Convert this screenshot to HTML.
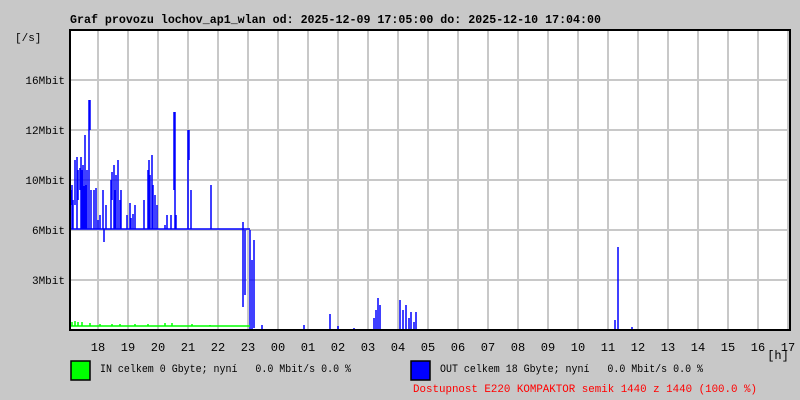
<!DOCTYPE html>
<html><head><style>
html,body{margin:0;padding:0;background:#c8c8c8;width:800px;height:400px;overflow:hidden}
svg{display:block}
text{font-family:"Liberation Mono",monospace;white-space:pre}
</style></head><body>
<svg width="800" height="400" xmlns="http://www.w3.org/2000/svg" xml:space="preserve">
<rect width="800" height="400" fill="#c8c8c8"/>
<text x="70" y="23" font-size="12" font-weight="bold" textLength="531" lengthAdjust="spacingAndGlyphs">Graf provozu lochov_ap1_wlan od: 2025-12-09 17:05:00 do: 2025-12-10 17:04:00</text>
<text x="15" y="41" font-size="11">[/s]</text>
<rect x="70" y="30" width="720" height="300" fill="#fff"/>
<g stroke="#c8c8c8" stroke-width="2">
<path d="M98 30V330M128 30V330M158 30V330M188 30V330M218 30V330M248 30V330M278 30V330M308 30V330M338 30V330M368 30V330M398 30V330M428 30V330M458 30V330M488 30V330M518 30V330M548 30V330M578 30V330M608 30V330M638 30V330M668 30V330M698 30V330M728 30V330M758 30V330M788 30V330"/>
<path d="M70 80H800M70 130H800M70 180H800M70 230H800M70 280H800"/>
</g>
<g font-size="11" text-anchor="end">
<text x="65" y="84">16Mbit</text><text x="65" y="134">12Mbit</text><text x="65" y="184">10Mbit</text><text x="65" y="234">6Mbit</text><text x="65" y="284">3Mbit</text>
</g>
<path fill="none" stroke="#00f" stroke-width="1.5" d="M70 229H250 M71 190V205M72 185V229M73 200V229M75 160V205M77 157V229M78 170V200M80 168V190M81 157V229M82 170V229M83 165V229M84 186V229M85 135V229M86 185V229M87 170V229M89 100V229M90 100V130M91 190V229M94 190V229M96 188V229M98 220V229M100 215V229M103 190V229M104 229V242M106 205V229M111 180V229M112 172V200M114 165V229M115 190V229M116 175V229M118 160V229M120 200V229M121 190V229M127 215V229M130 203V229M131 218V229M133 214V229M135 205V229M144 200V229M148 170V229M149 160V229M150 175V229M152 155V229M153 185V229M155 195V229M157 205V229M165 225V229M167 215V229M171 215V229M174 112V190M175 112V229M176 215V229M188 130V229M189 130V160M191 190V229M211 185V229M243 222V307M245 230V295M250 230V330M252 260V330M254 240V328M262 325V330M304 325V330M330 314V330M338 326V330M354 328V330M374 318V330M376 310V330M378 298V330M380 305V330M400 300V330M403 310V330M406 305V330M409 318V330M411 312V330M414 322V330M416 312V330M615 320V330M618 247V330M632 327V330"/>
<path fill="none" stroke="#0f0" stroke-width="1.5" d="M70 326H250M72 322V326M75 321V326M78 322V326M82 322V326M90 323V326M100 324V326M112 324V326M120 324V326M135 324V326M148 324V326M165 323V326M172 323V326M192 324V326M210 325V326"/>
<rect x="70" y="30" width="720" height="300" fill="none" stroke="#000" stroke-width="2"/>
<g font-size="12" text-anchor="middle">
<text x="98" y="351">18</text><text x="128" y="351">19</text><text x="158" y="351">20</text><text x="188" y="351">21</text><text x="218" y="351">22</text><text x="248" y="351">23</text><text x="278" y="351">00</text><text x="308" y="351">01</text><text x="338" y="351">02</text><text x="368" y="351">03</text><text x="398" y="351">04</text><text x="428" y="351">05</text><text x="458" y="351">06</text><text x="488" y="351">07</text><text x="518" y="351">08</text><text x="548" y="351">09</text><text x="578" y="351">10</text><text x="608" y="351">11</text><text x="638" y="351">12</text><text x="668" y="351">13</text><text x="698" y="351">14</text><text x="728" y="351">15</text><text x="758" y="351">16</text><text x="788" y="351">17</text>
<text x="778" y="359">[h]</text>
</g>
<rect x="71" y="361" width="19" height="19" fill="#0f0" stroke="#000" stroke-width="1.5"/>
<text x="100" y="372" font-size="11" textLength="251" lengthAdjust="spacingAndGlyphs">IN celkem 0 Gbyte; nyní   0.0 Mbit/s 0.0 %</text>
<rect x="411" y="361" width="19" height="19" fill="#00f" stroke="#000" stroke-width="1.5"/>
<text x="440" y="372" font-size="11" textLength="263" lengthAdjust="spacingAndGlyphs">OUT celkem 18 Gbyte; nyní   0.0 Mbit/s 0.0 %</text>
<text x="413" y="392" font-size="11" fill="#f00" textLength="344" lengthAdjust="spacingAndGlyphs">Dostupnost E220 KOMPAKTOR semik 1440 z 1440 (100.0 %)</text>
</svg>
</body></html>
